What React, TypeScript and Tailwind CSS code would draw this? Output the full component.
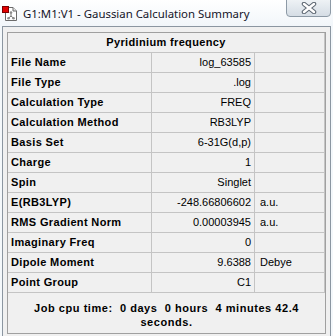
import React from "react";

const rows: [string, string, string][] = [
  ["File Name", "log_63585", ""],
  ["File Type", ".log", ""],
  ["Calculation Type", "FREQ", ""],
  ["Calculation Method", "RB3LYP", ""],
  ["Basis Set", "6-31G(d,p)", ""],
  ["Charge", "1", ""],
  ["Spin", "Singlet", ""],
  ["E(RB3LYP)", "-248.66806602", "a.u."],
  ["RMS Gradient Norm", "0.00003945", "a.u."],
  ["Imaginary Freq", "0", ""],
  ["Dipole Moment", "9.6388", "Debye"],
  ["Point Group", "C1", ""],
];

function GaussIcon() {
  return (
    <svg width="16" height="17" viewBox="0 0 16 17" className="shrink-0">
      <path d="M3.5 2.5 H11 L14.5 6 V15.5 H3.5 Z" fill="#ffffff" stroke="#6b6b6b" strokeWidth="1" />
      <path d="M11 2.5 V6 H14.5" fill="#e8e8e8" stroke="#6b6b6b" strokeWidth="1" />
      <line x1="9" y1="7.5" x2="9" y2="11" stroke="#777" strokeWidth="1" />
      <line x1="9" y1="11" x2="6.5" y2="13.2" stroke="#777" strokeWidth="1" />
      <line x1="9" y1="11" x2="11.5" y2="13.2" stroke="#777" strokeWidth="1" />
      <circle cx="9" cy="7.5" r="1.3" fill="#8a8a8a" />
      <circle cx="6.5" cy="13.2" r="1.3" fill="#8a8a8a" />
      <circle cx="11.5" cy="13.2" r="1.3" fill="#8a8a8a" />
      <rect x="0.5" y="1.5" width="6" height="6" fill="#e00000" stroke="#7a0000" strokeWidth="1" />
    </svg>
  );
}

export default function App() {
  return (
    <div
      className="relative w-[333px] h-[336px] overflow-hidden bg-[#f4f8fb]"
      style={{ fontFamily: '"Liberation Sans", Arial, sans-serif' }}
    >
      {/* title bar */}
      <div className="h-[26px] flex items-center pl-[2px] gap-[5px] bg-gradient-to-b from-[#ffffff] to-[#f2f6fa]">
        <GaussIcon />
        <span
          className="text-[11.4px] text-[#141428] leading-none mt-[1px]"
          style={{ fontFamily: '"Noto Sans", "Open Sans", sans-serif' }}
        >
          G1:M1:V1 - Gaussian Calculation Summary
        </span>
      </div>

      {/* close button */}
      <div className="absolute top-[-1px] left-[286px] w-[45px] h-[18px] rounded-b-[4px] border border-[#8d9aa6] bg-gradient-to-b from-[#eef2f5] to-[#d5dde5] flex items-center justify-center">
        <svg width="16" height="12" viewBox="0 0 16 12">
          <path d="M3 2 L13 10 M13 2 L3 10" stroke="#5b6570" strokeWidth="4.5" strokeLinecap="round" />
          <path d="M3 2 L13 10 M13 2 L3 10" stroke="#ffffff" strokeWidth="2.5" strokeLinecap="round" />
        </svg>
      </div>

      {/* client area */}
      <div className="absolute left-[2px] top-[26px] w-[329px] h-[320px] border border-[#8b96a1] bg-[#f0f0f0] pl-[4px] pt-[5px]">
        <div className="w-[319px] h-[302px] border border-[#a0a0a0] bg-[#f0f0f0] flex flex-col">
          <div className="w-[317px] border-r border-[#c4c4c4]">
            <div className="h-[20px] border-b border-[#c4c4c4] flex items-center justify-center text-[11px] font-bold text-black tracking-[0.35px]">
              Pyridinium frequency
            </div>
            {rows.map(([label, value, unit]) => (
              <div key={label} className="h-[20px] border-b border-[#c4c4c4] flex text-[11px] text-black">
                <div className="w-[144px] border-r border-[#c4c4c4] flex items-center pl-[3px] font-bold tracking-[0.35px]">
                  {label}
                </div>
                <div className="w-[103px] border-r border-[#c4c4c4] flex items-center justify-end pr-[3px]">
                  {value}
                </div>
                <div className="flex-1 flex items-center pl-[5px]">{unit}</div>
              </div>
            ))}
          </div>
          <div className="flex-1 flex flex-col items-center pt-[8px] text-[11px] font-bold text-black tracking-[0.55px] leading-[14px] whitespace-pre">
            <span>{"Job cpu time:  0 days  0 hours  4 minutes 42.4"}</span>
            <span>seconds.</span>
          </div>
        </div>
      </div>
    </div>
  );
}
